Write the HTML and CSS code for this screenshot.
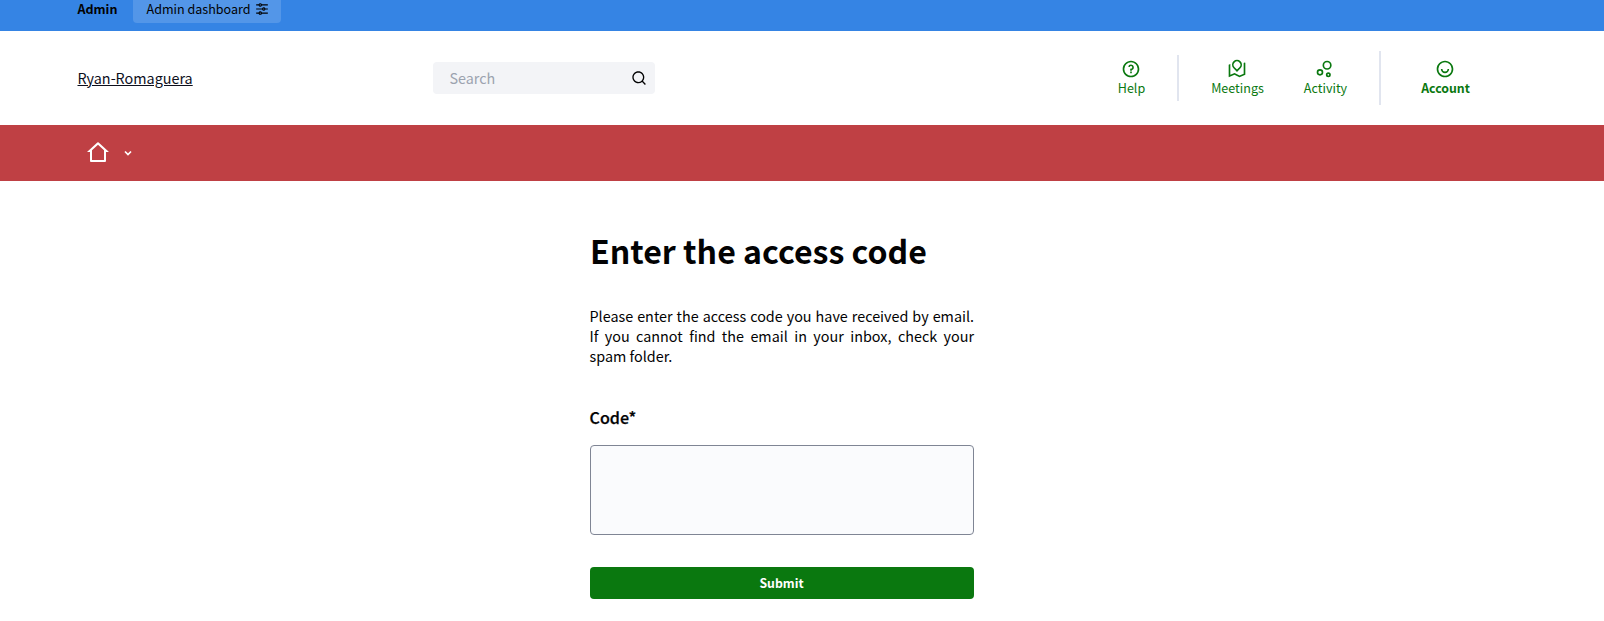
FILE: index.html
```html
<!DOCTYPE html>
<html lang="en">
<head>
<meta charset="utf-8">
<title>Enter the access code</title>
<link rel="stylesheet" href="styles.css">
</head>
<body>
<div class="admin-bar">
  <strong class="admin-title">Admin</strong>
  <a class="admin-link"><span>Admin dashboard</span>
    <svg class="icon-equalizer" viewBox="0 0 24 24"><path d="M6.17 18a3 3 0 0 1 5.66 0H22v2H11.83a3 3 0 0 1-5.66 0H2v-2h4.17zm6-7a3 3 0 0 1 5.66 0H22v2h-4.17a3 3 0 0 1-5.66 0H2v-2h10.17zm-6-7a3 3 0 0 1 5.66 0H22v2H11.83a3 3 0 0 1-5.66 0H2V4h4.17zM9 6a1 1 0 1 0 0-2 1 1 0 0 0 0 2zm6 7a1 1 0 1 0 0-2 1 1 0 0 0 0 2zm-6 7a1 1 0 1 0 0-2 1 1 0 0 0 0 2z"/></svg>
  </a>
</div>
<header class="header">
  <a class="brand">Ryan-Romaguera</a>
  <div class="search">
    <span class="search-text">Search</span>
    <svg class="icon-search" viewBox="0 0 24 24"><path d="M18.031 16.617l4.283 4.282-1.415 1.415-4.282-4.283A8.96 8.96 0 0 1 11 20c-4.968 0-9-4.032-9-9s4.032-9 9-9 9 4.032 9 9a8.96 8.96 0 0 1-1.969 5.617zm-2.006-.742A6.977 6.977 0 0 0 18 11c0-3.868-3.133-7-7-7-3.868 0-7 3.132-7 7 0 3.867 3.132 7 7 7a6.977 6.977 0 0 0 4.875-1.975l.15-.15z"/></svg>
  </div>
  <nav class="links">
    <a class="link help">
      <svg viewBox="0 0 24 24"><path d="M12 22C6.477 22 2 17.523 2 12S6.477 2 12 2s10 4.477 10 10-4.477 10-10 10zm0-2a8 8 0 1 0 0-16 8 8 0 0 0 0 16zm-1-5h2v2h-2v-2zm2-1.645V14h-2v-1.5a1 1 0 0 1 1-1 1.5 1.5 0 1 0-1.471-1.794l-1.962-.393A3.501 3.501 0 1 1 13 13.355z"/></svg>
      <span>Help</span>
    </a>
    <i class="rule"></i>
    <a class="link meetings">
      <svg viewBox="0 0 24 24"><path d="M4 6.143v12.824l5.065-2.171 6 3L20 17.681V4.857l1.303-.558a.5.5 0 0 1 .697.46V19l-7 3-6-3-6.303 2.701a.5.5 0 0 1-.697-.46V7l2-.857zm12.243 5.1L12 15.485l-4.243-4.242a6 6 0 1 1 8.486 0zM12 12.657l2.828-2.829a4 4 0 1 0-5.656 0L12 12.657z"/></svg>
      <span>Meetings</span>
    </a>
    <a class="link activity">
      <svg class="stroked" viewBox="0 0 24 24"><circle cx="14.5" cy="7.5" r="4.5"/><circle cx="6" cy="16" r="3"/><circle cx="16" cy="19" r="2"/></svg>
      <span>Activity</span>
    </a>
    <i class="rule tall"></i>
    <a class="link account">
      <svg viewBox="0 0 24 24"><path d="M12 22C6.477 22 2 17.523 2 12S6.477 2 12 2s10 4.477 10 10-4.477 10-10 10zm0-2a8 8 0 1 0 0-16 8 8 0 0 0 0 16zm-5-8h2a3 3 0 0 0 6 0h2a5 5 0 0 1-10 0z"/></svg>
      <span>Account</span>
    </a>
  </nav>
</header>
<div class="menu-bar">
  <svg class="icon-home" viewBox="0 0 24 24"><path d="M19 21H5a1 1 0 0 1-1-1v-9H1l10.327-9.388a1 1 0 0 1 1.346 0L23 11h-3v9a1 1 0 0 1-1 1zM6 19h12V9.157l-6-5.454-6 5.454V19z"/></svg>
  <svg class="icon-arrow" viewBox="0 0 16 16"><path d="M5 6.5 8 9.5l3-3"/></svg>
</div>
<main class="content">
  <h1 class="title">Enter the access code</h1>
  <p class="intro">Please enter the access code you have received by email. If you cannot find the email in your inbox, check your spam folder.</p>
  <label class="label" for="code">Code*</label>
  <textarea class="code" id="code"></textarea>
  <button class="submit">Submit</button>
</main>
</body>
</html>
```
FILE: styles.css
```css
* { box-sizing: border-box; }
body {
  margin: 0;
  height: 621px;
  overflow: hidden;
  background: #fff;
  color: #020203;
  font-family: "Noto Sans CJK SC", "Noto Sans", sans-serif;
  font-size: 14.36px;
  line-height: 20px;
}
svg { display: block; fill: currentColor; flex: none; }
.admin-bar {
  height: 31px;
  padding-left: 77.5px;
  display: flex;
  align-items: flex-start;
  background: #3584e4;
  font-size: 12.56px;
  line-height: 18px;
}
.admin-title { width: 55.5px; font-size: 12.5px; font-weight: 700; }
.admin-link {
  width: 148px;
  height: 23px;
  padding-left: 13.5px;
  display: flex;
  gap: 4px;
  border-radius: 0 0 4px 4px;
  background: #5396e8;
}
.icon-equalizer { width: 14px; height: 14px; margin-top: 2px; }
.header { height: 94px; padding-left: 77.5px; display: flex; align-items: center; }
.brand { width: 355.5px; color: #0d0f1c; text-decoration: underline; }
.search {
  width: 222px;
  height: 32px;
  padding: 0 8px 0 16.5px;
  display: flex;
  align-items: center;
  justify-content: space-between;
  border-radius: 4px;
  background: #f3f4f7;
}
.search-text { color: #9ca3af; }
.icon-search { width: 16px; height: 16px; }
.links {
  margin-left: 453px;
  display: flex;
  align-items: center;
  color: #0a780f;
  font-size: 12.56px;
  line-height: 18px;
}
.link { display: flex; flex-direction: column; align-items: center; white-space: nowrap; }
.link svg { width: 20px; height: 20px; }
.link span { padding-left: 1px; }
.link .stroked { fill: none; stroke: currentColor; stroke-width: 2; }
.help { width: 46px; }
.rule { width: 2px; height: 46px; margin-left: 23px; background: #e1e5ef; }
.tall { height: 54px; }
.meetings { width: 60px; margin-left: 28px; }
.activity { width: 60px; margin-left: 28px; }
.links .tall { margin-left: 24px; }
.account { width: 60px; margin-left: 34px; font-size: 12.3px; font-weight: 700; }
.menu-bar {
  height: 56px;
  padding: 16px 0 0 86px;
  display: flex;
  gap: 10px;
  background: #bf4044;
  color: #fff;
}
.icon-home { width: 24px; height: 24px; }
.icon-arrow { width: 16px; height: 16px; margin-top: 4px; fill: none; stroke: currentColor; stroke-width: 1.7; }
.content { width: 384px; margin-left: 590px; padding-top: 47px; display: flex; flex-direction: column; }
.title { margin: 0; font-size: 32.08px; line-height: 45px; font-weight: 700; white-space: nowrap; }
.intro { margin: 33px 0 0 -0.5px; text-align: justify; }
.label { margin: 40px 0 0 -0.5px; font-size: 16.1px; line-height: 22px; font-weight: 500; -webkit-text-stroke: 0.25px currentColor; }
.code {
  width: 384px;
  height: 90px;
  margin: 17px 0 0;
  border: 1px solid #7f8594;
  border-radius: 4px;
  background: #fafbfd;
  resize: none;
}
.submit {
  height: 32px;
  margin-top: 32px;
  padding: 0 1px 0 0;
  border: 0;
  border-radius: 4px;
  background: #0a780f;
  color: #fff;
  font: 700 12.3px/32px "Noto Sans CJK SC", sans-serif;
}
```
